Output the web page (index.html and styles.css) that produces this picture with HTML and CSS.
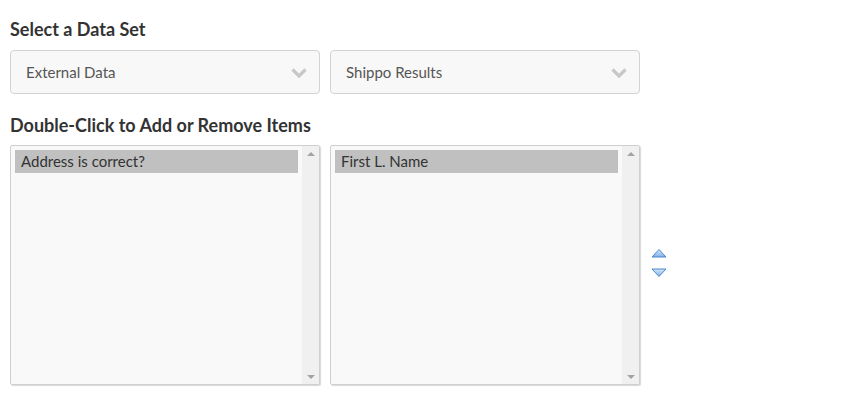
FILE: index.html
```html
<!DOCTYPE html>
<html lang="en">
<head>
    <meta charset="UTF-8">
    <title>Select Data</title>
    <link rel="stylesheet" href="styles.css">
</head>
<body>

<div class="panel">
    <h3 class="section-title">Select a Data Set</h3>
    <div class="row">
        <div class="dropdown">
            <span>External Data</span>
            <svg class="chevron" width="16" height="10" viewBox="0 0 16 10"><path d="M1.5 1.5 L8 8 L14.5 1.5" fill="none" stroke="#c8c8c8" stroke-width="3.2"/></svg>
        </div>
        <div class="dropdown">
            <span>Shippo Results</span>
            <svg class="chevron" width="16" height="10" viewBox="0 0 16 10"><path d="M1.5 1.5 L8 8 L14.5 1.5" fill="none" stroke="#c8c8c8" stroke-width="3.2"/></svg>
        </div>
    </div>

    <h3 class="section-title">Double-Click to Add or Remove Items</h3>
    <div class="row">
        <div class="listbox">
            <div class="items">
                <div class="item selected">Address is correct?</div>
            </div>
            <div class="scrollbar">
                <span class="arrow up"></span>
                <span class="arrow down"></span>
            </div>
        </div>
        <div class="listbox">
            <div class="items">
                <div class="item selected">First L. Name</div>
            </div>
            <div class="scrollbar">
                <span class="arrow up"></span>
                <span class="arrow down"></span>
            </div>
        </div>
        <div class="movers">
            <svg width="16" height="10" viewBox="0 0 16 10"><defs><linearGradient id="gu" x1="0" y1="0" x2="0" y2="1"><stop offset="0" stop-color="#d6e8fb"/><stop offset="1" stop-color="#7fb0e6"/></linearGradient></defs><path d="M1 9 L8 1.5 L15 9 Z" fill="url(#gu)" stroke="#4a86cc" stroke-width="1"/></svg>
            <svg width="16" height="10" viewBox="0 0 16 10"><defs><linearGradient id="gd" x1="0" y1="0" x2="0" y2="1"><stop offset="0" stop-color="#d6e8fb"/><stop offset="1" stop-color="#7fb0e6"/></linearGradient></defs><path d="M1 1 L15 1 L8 8.5 Z" fill="url(#gd)" stroke="#4a86cc" stroke-width="1"/></svg>
        </div>
    </div>
</div>

</body>
</html>
```

FILE: styles.css
```css
body {
    margin: 0;
    font-family: Lato, "Open Sans", sans-serif;
    color: #333;
    background: #fff;
}
.panel {
    padding: 18px 10px 0 10px;
}
.section-title {
    font-size: 18px;
    font-weight: bold;
    margin: 0 0 10px 0;
    line-height: 22px;
    color: #333;
}
.row {
    display: flex;
    gap: 10px;
    margin-bottom: 20px;
}
.dropdown {
    width: 310px;
    height: 44px;
    box-sizing: border-box;
    border: 1px solid #d3d3d3;
    border-radius: 4px;
    background: #f8f8f8;
    display: flex;
    align-items: center;
    justify-content: space-between;
    padding: 0 12px 0 15px;
    font-size: 15px;
    color: #555;
}
.chevron {
    margin-top: 1px;
}
.listbox {
    width: 310px;
    height: 240px;
    margin-top: -1px;
    box-sizing: border-box;
    border: 1px solid #cfcfcf;
    border-radius: 2px;
    background: #f9f9f9;
    display: flex;
    box-shadow: 1px 1px 1px #d8d8d8;
}
.items {
    flex: 1;
    padding: 4px 4px;
}
.item {
    font-size: 15px;
    line-height: 23px;
    padding: 0 6px;
    color: #333;
}
.item.selected {
    background: #c0c0c0;
}
.scrollbar {
    width: 17px;
    background: #f0f0f0;
    display: flex;
    flex-direction: column;
    justify-content: space-between;
    align-items: center;
    padding: 6px 0 5px 0;
}
.arrow {
    width: 0;
    height: 0;
    border-left: 4px solid transparent;
    border-right: 4px solid transparent;
}
.arrow.up {
    border-bottom: 4px solid #a3a3a3;
}
.arrow.down {
    border-top: 4px solid #a3a3a3;
}
.movers {
    display: flex;
    flex-direction: column;
    justify-content: center;
    gap: 10px;
    padding-left: 1px;
    padding-bottom: 6px;
}
.movers svg {
    display: block;
}
```
